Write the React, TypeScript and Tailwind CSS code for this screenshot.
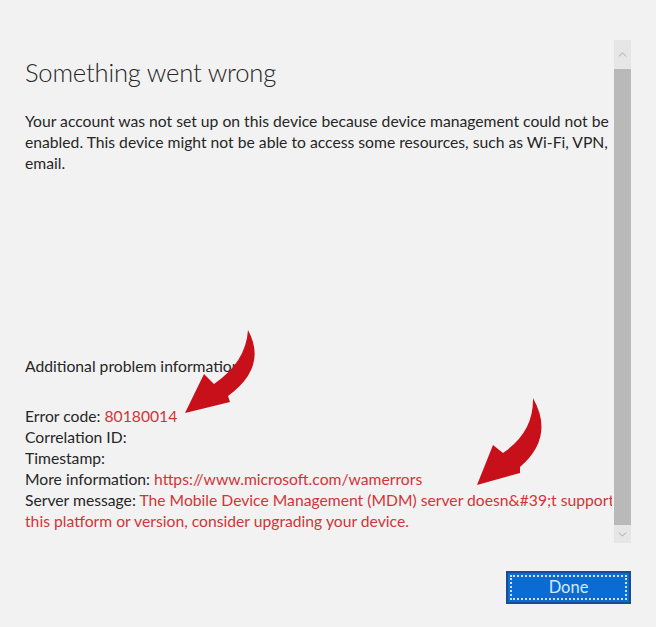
import { ChevronUp, ChevronDown } from "lucide-react";

const red = "text-[#d13438]";

function Arrows() {
  return (
    <svg
      className="absolute inset-0 pointer-events-none"
      width={656}
      height={627}
      viewBox="0 0 656 627"
    >
      <path
        d="M248 330 Q268 367 228 396 L230 402 L185 413 L204 374 L214 384 Q246 362 248 330 Z"
        fill="#c8101a"
      />
      <path
        d="M533 398 Q555 437 520 467 L520 473 L477 485 L493 445 L503 453 Q534 432 533 398 Z"
        fill="#c8101a"
      />
    </svg>
  );
}

export default function App() {
  return (
    <div
      className="relative w-[656px] h-[627px] bg-[#f2f2f2] text-[#262626] overflow-hidden"
      style={{ fontFamily: "Lato, 'Open Sans', sans-serif" }}
    >
      <div className="flex pt-[40px] px-[25px]">
        {/* scrolling content */}
        <div className="flex-1 h-[506px] overflow-hidden pt-[17px] whitespace-nowrap">
          <h1 className="text-[25.6px] font-light leading-[30px] tracking-[-0.2px]">
            Something went wrong
          </h1>
          <p className="mt-[24px] text-[15.7px] leading-[21px]">
            Your account was not set up on this device because device management could not be
            <br />
            enabled. This device might not be able to access some resources, such as Wi-Fi, VPN, or
            <br />
            email.
          </p>

          <div className="mt-[182px] text-[15.7px] leading-[21px]">
            <p>Additional problem information</p>
            <div className="mt-[29px]">
              <p>
                Error code: <span className={red}>80180014</span>
              </p>
              <p>Correlation ID:</p>
              <p>Timestamp:</p>
              <p>
                More information:{" "}
                <span className={red}>https://www.microsoft.com/wamerrors</span>
              </p>
              <p>
                Server message:{" "}
                <span className={red}>
                  The Mobile Device Management (MDM) server doesn&amp;#39;t support
                </span>
              </p>
              <p className={red}>this platform or version, consider upgrading your device.</p>
            </div>
          </div>
        </div>

        {/* scrollbar */}
        <div className="w-[17px] h-[503px] ml-[2px] flex flex-col">
          <div className="h-[29px] bg-[#e6e6e6] flex items-center justify-center">
            <ChevronUp className="w-[13px] h-[13px] text-[#9a9a9a]" strokeWidth={1.5} />
          </div>
          <div className="flex-1 bg-[#b9b9b9]" />
          <div className="h-[18px] bg-[#e6e6e6] flex items-center justify-center">
            <ChevronDown className="w-[13px] h-[13px] text-[#9a9a9a]" strokeWidth={1.5} />
          </div>
        </div>
      </div>

      <div className="flex justify-end pr-[25px] pt-[25px]">
        <button className="w-[125px] h-[33px] bg-[#0a6cd2] border-2 border-[#1b4b92] p-[2px]">
          <span className="flex h-full w-full items-center justify-center border-2 border-dotted border-white/80 text-[16.5px] text-[#d6e8fa]">
            Done
          </span>
        </button>
      </div>

      <Arrows />
    </div>
  );
}
